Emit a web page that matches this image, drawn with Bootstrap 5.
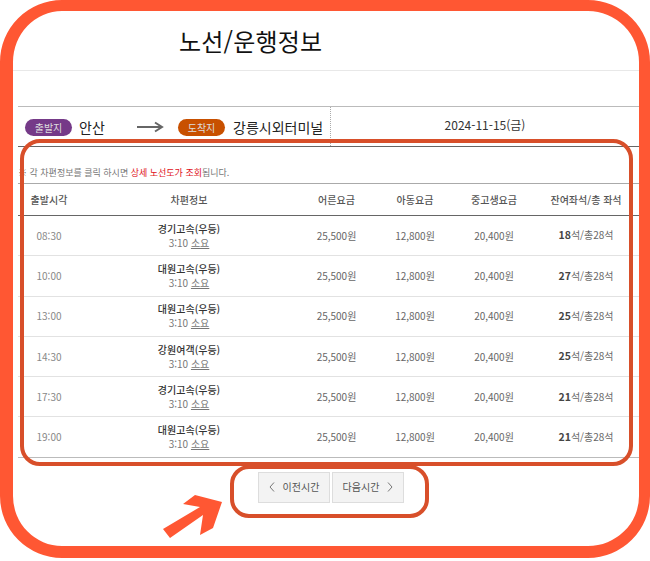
<!DOCTYPE html>
<html lang="ko">
<head>
<meta charset="utf-8">
<title>노선/운행정보</title>
<link rel="stylesheet" href="https://cdn.jsdelivr.net/npm/bootstrap@5.3.0/dist/css/bootstrap.min.css">
<style>
html,body{height:561px;overflow:hidden;background:#fff}
body{position:relative;font-family:"Noto Sans CJK KR","Noto Sans",sans-serif;color:#555;font-size:10px;line-height:1.2}
.page-title{height:71px;margin:0 0 35px;padding:25px 0 0 179px;font-size:24px;font-weight:400;line-height:32px;letter-spacing:.2px;color:#111;border-bottom:1px solid #e8e8e8}
.route-bar{margin-left:18px;margin-right:11px;height:41px;border-top:1px solid #bbb;border-bottom:1px solid #666}
.route-left{width:313px;padding-left:7px;border-right:1px dotted #aaa}
.pill{width:47px;height:17px;border-radius:9px;color:#ddd;font-size:10px;line-height:17px;text-align:center;margin-top:2px}
.pill-from{background:#753a88}
.pill-to{background:#c85000}
.place{font-size:14px;color:#222;line-height:20px}
.place-from{margin-left:7px;width:57px}
.place-to{margin-left:8px}
.arrow-ico{width:28px;height:12px;margin-right:14px}
.date-cell{color:#333;font-size:12px;padding-bottom:3px}
.note{margin:20px 11px 0 18px;height:16px;font-size:9px;line-height:12px;color:#777;white-space:nowrap}
.note b{font-weight:400;color:#e01020}
.bus-table{width:621px;margin:0 0 0 18px;table-layout:fixed;border-collapse:collapse}
.bus-table th,.bus-table td{padding:0;text-align:center;vertical-align:middle;color:#666;background:transparent;box-shadow:none}
.bus-table thead th{height:32px;font-size:10px;font-weight:500;color:#555;border-top:1px solid #aaa;border-bottom:1px solid #666}
.bus-table tbody td{height:40.3px;border-bottom:1px solid #e2e2e2;font-size:10px}
.bus-table tbody tr:last-child td{border-bottom:1px solid #bbb}
.bus-table .time{color:#888}
.co{display:block;font-weight:500;color:#333;font-size:10px;line-height:14px}
.dur{display:block;color:#777;line-height:14px}
.dur u{text-underline-offset:1px}
.seat b{font-weight:700;color:#444;font-size:10.5px}
.pager{margin:14px 0 0 258px;gap:2px}
.pager-btn{width:72px;height:31px;padding:0;border:1px solid #ddd;border-radius:0;background:#f3f3f3;color:#555;font-size:10px;line-height:1}
.pager-btn:hover{background:#f3f3f3;color:#555;border-color:#ddd}
.chev{width:6px;height:10px}
.frame-outer{position:absolute;left:0;top:0;width:650px;height:558px;border:solid #ff5733;border-width:11px 11px 12px 13px;border-radius:62px;pointer-events:none}
.frame-table{position:absolute;left:20px;top:139px;width:613px;height:327px;border:4px solid #d84f2a;border-radius:20px;pointer-events:none}
.frame-pager{position:absolute;left:230px;top:465px;width:199px;height:53px;border:4px solid #d84f2a;border-radius:19px;pointer-events:none}
.big-arrow{position:absolute;left:160px;top:492px;width:70px;height:50px;pointer-events:none}
</style>
</head>
<body>
<h1 class="page-title">노선/운행정보</h1>

<div class="route-bar d-flex">
  <div class="route-left d-flex align-items-center">
    <span class="pill pill-from">출발지</span>
    <span class="place place-from">안산</span>
    <svg class="arrow-ico" viewBox="0 0 28 12"><path d="M1 6H25M19 1.5 26 6l-7 4.5" fill="none" stroke="#666" stroke-width="2"/></svg>
    <span class="pill pill-to">도착지</span>
    <span class="place place-to">강릉시외터미널</span>
  </div>
  <div class="date-cell flex-grow-1 d-flex align-items-center justify-content-center">2024-11-15(금)</div>
</div>

<p class="note">※ 각 차편정보를 클릭 하시면 <b>상세 노선도가 조회</b>됩니다.</p>

<table class="table bus-table mb-0">
  <colgroup>
    <col style="width:62px"><col style="width:218px"><col style="width:77px"><col style="width:80px"><col style="width:78px"><col style="width:106px">
  </colgroup>
  <thead>
    <tr><th>출발시각</th><th>차편정보</th><th>어른요금</th><th>아동요금</th><th>중고생요금</th><th>잔여좌석/총 좌석</th></tr>
  </thead>
  <tbody>
    <tr><td class="time">08:30</td><td><span class="co">경기고속(우등)</span><span class="dur">3:10 <u>소요</u></span></td><td>25,500원</td><td>12,800원</td><td>20,400원</td><td class="seat"><b>18</b>석/총28석</td></tr>
    <tr><td class="time">10:00</td><td><span class="co">대원고속(우등)</span><span class="dur">3:10 <u>소요</u></span></td><td>25,500원</td><td>12,800원</td><td>20,400원</td><td class="seat"><b>27</b>석/총28석</td></tr>
    <tr><td class="time">13:00</td><td><span class="co">대원고속(우등)</span><span class="dur">3:10 <u>소요</u></span></td><td>25,500원</td><td>12,800원</td><td>20,400원</td><td class="seat"><b>25</b>석/총28석</td></tr>
    <tr><td class="time">14:30</td><td><span class="co">강원여객(우등)</span><span class="dur">3:10 <u>소요</u></span></td><td>25,500원</td><td>12,800원</td><td>20,400원</td><td class="seat"><b>25</b>석/총28석</td></tr>
    <tr><td class="time">17:30</td><td><span class="co">경기고속(우등)</span><span class="dur">3:10 <u>소요</u></span></td><td>25,500원</td><td>12,800원</td><td>20,400원</td><td class="seat"><b>21</b>석/총28석</td></tr>
    <tr><td class="time">19:00</td><td><span class="co">대원고속(우등)</span><span class="dur">3:10 <u>소요</u></span></td><td>25,500원</td><td>12,800원</td><td>20,400원</td><td class="seat"><b>21</b>석/총28석</td></tr>
  </tbody>
</table>

<div class="pager d-flex">
  <button type="button" class="btn pager-btn d-flex align-items-center justify-content-center gap-2"><svg class="chev" viewBox="0 0 6 10"><path d="M5 .5 1 5l4 4.5" fill="none" stroke="#777"/></svg>이전시간</button>
  <button type="button" class="btn pager-btn d-flex align-items-center justify-content-center gap-2">다음시간<svg class="chev" viewBox="0 0 6 10"><path d="M1 .5 5 5 1 9.5" fill="none" stroke="#777"/></svg></button>
</div>

<div class="frame-outer"></div>
<div class="frame-table"></div>
<div class="frame-pager"></div>
<svg class="big-arrow" viewBox="160 492 70 50"><polygon points="163,529 170,538 203,515 200,535 213,528 222,502 195,495 183,504 200,507" fill="#ff5733"/></svg>

<script src="https://cdn.jsdelivr.net/npm/bootstrap@5.3.0/dist/js/bootstrap.bundle.min.js"></script>
</body>
</html>
